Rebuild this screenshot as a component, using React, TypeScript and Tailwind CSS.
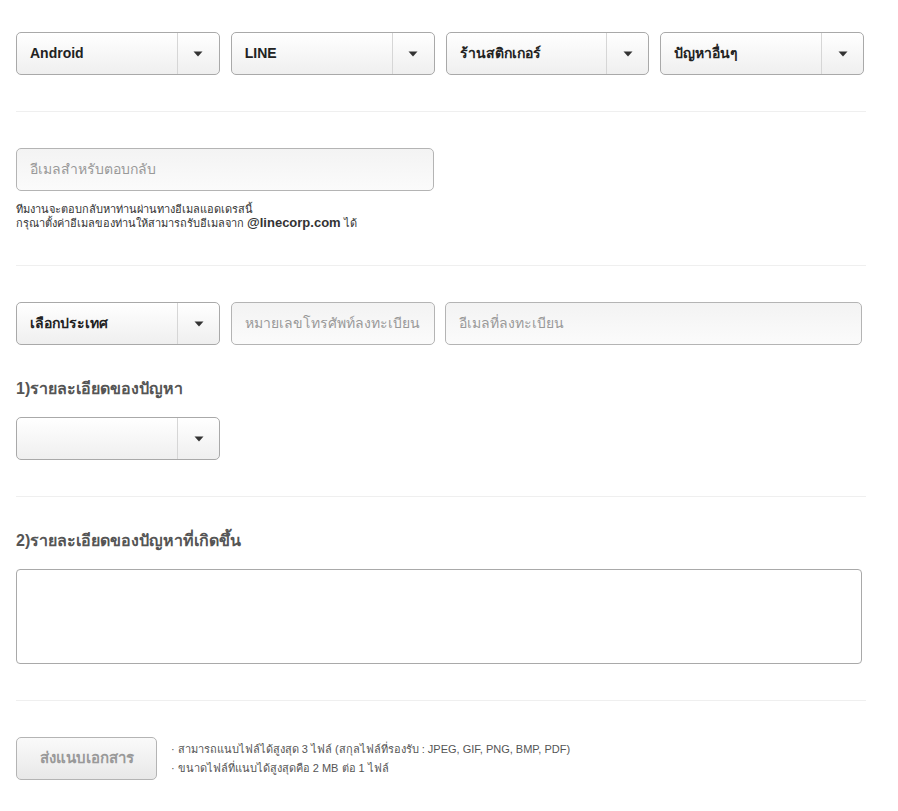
import React from "react";

function Arrow() {
  return (
    <svg width="10" height="6" viewBox="0 0 10 6" className="block">
      <path d="M0.5 0.5 H9.5 L5 5.5 Z" fill="#333" />
    </svg>
  );
}

function Select({ label, bold = true }: { label: string; bold?: boolean }) {
  return (
    <div className="flex h-[43px] flex-1 items-stretch rounded-[5px] border border-[#a9a9a9] bg-gradient-to-b from-white to-[#efefef] shadow-[inset_0_1px_0_#fff]">
      <div className={`flex flex-1 items-center px-[13px] text-[14px] text-[#222] ${bold ? "font-bold" : ""}`}>{label}</div>
      <div className="flex w-[42px] items-center justify-center border-l border-[#d6d6d6]">
        <Arrow />
      </div>
    </div>
  );
}

function Input({ placeholder, className = "" }: { placeholder: string; className?: string }) {
  return (
    <div className={`flex h-[43px] items-center rounded-[5px] border border-[#b4b4b4] bg-gradient-to-b from-[#f3f3f3] to-[#fbfbfb] px-[13px] text-[14px] text-[#999] ${className}`}>
      {placeholder}
    </div>
  );
}

export default function App() {
  return (
    <div className="min-h-[811px] w-[898px] bg-white font-['Liberation_Sans',Tahoma,sans-serif]">
      <div className="ml-[16px] w-[850px]">
        <div className="border-b border-[#efefef] pb-[36px] pt-[32px]">
          <div className="flex w-[848px] gap-[11px]">
            <Select label="Android" />
            <Select label="LINE" />
            <Select label="ร้านสติกเกอร์" />
            <Select label="ปัญหาอื่นๆ" />
          </div>
        </div>

        <div className="border-b border-[#efefef] pb-[35px] pt-[36px]">
          <Input placeholder="อีเมลสำหรับตอบกลับ" className="w-[418px]" />
          <div className="mt-[11px] text-[11px] leading-[14px] text-[#333]">
            <div className="h-[14px]">ทีมงานจะตอบกลับหาท่านผ่านทางอีเมลแอดเดรสนี้</div>
            <div className="h-[14px]">
              กรุณาตั้งค่าอีเมลของท่านให้สามารถรับอีเมลจาก <span className="text-[13px] font-bold leading-[14px]">@linecorp.com</span> ได้
            </div>
          </div>
        </div>

        <div className="border-b border-[#efefef] pb-[36px] pt-[36px]">
          <div className="flex">
            <div className="flex w-[204px]">
              <Select label="เลือกประเทศ" />
            </div>
            <Input placeholder="หมายเลขโทรศัพท์ลงทะเบียน" className="ml-[11px] w-[204px]" />
            <Input placeholder="อีเมลที่ลงทะเบียน" className="ml-[10px] w-[417px]" />
          </div>
          <div className="mt-[34px] text-[16px] font-bold leading-[20px] text-[#555]">1)รายละเอียดของปัญหา</div>
          <div className="mt-[18px] flex w-[204px]">
            <Select label="" />
          </div>
        </div>

        <div className="border-b border-[#efefef] pb-[36px] pt-[34px]">
          <div className="text-[16px] font-bold leading-[20px] text-[#555]">2)รายละเอียดของปัญหาที่เกิดขึ้น</div>
          <div className="mt-[18px] h-[95px] w-[846px] rounded-[4px] border border-[#a9a9a9] bg-white" />
        </div>

        <div className="flex items-center gap-[14px] pt-[36px]">
          <div className="flex h-[43px] w-[141px] items-center justify-center rounded-[5px] border border-[#b4b4b4] bg-gradient-to-b from-[#fafafa] to-[#e8e8e8] text-[15px] font-bold text-[#999]">
            ส่งแนบเอกสาร
          </div>
          <div className="text-[11px] leading-[19px] text-[#555]">
            <div>· สามารถแนบไฟล์ได้สูงสุด 3 ไฟล์ (สกุลไฟล์ที่รองรับ : JPEG, GIF, PNG, BMP, PDF)</div>
            <div>· ขนาดไฟล์ที่แนบได้สูงสุดคือ 2 MB ต่อ 1 ไฟล์</div>
          </div>
        </div>
      </div>
    </div>
  );
}
